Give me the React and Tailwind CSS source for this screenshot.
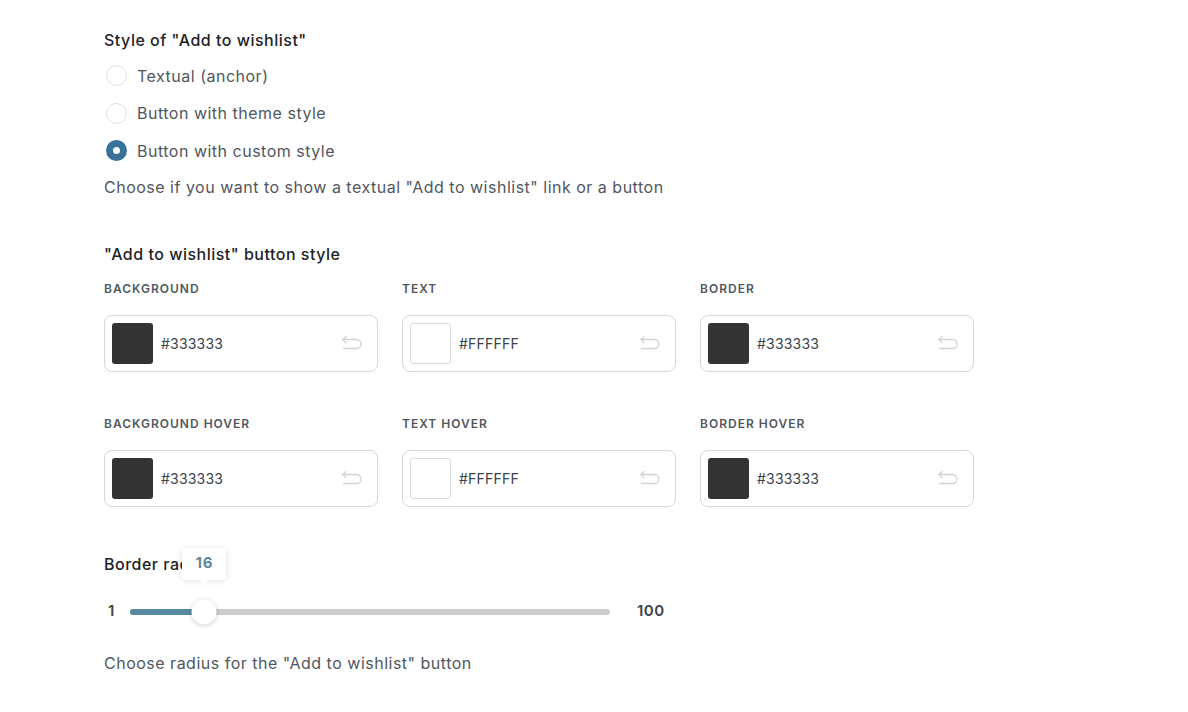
const font = { fontFamily: 'Inter, "Noto Sans", sans-serif' };

const radios = [
  { label: 'Textual (anchor)', checked: false },
  { label: 'Button with theme style', checked: false },
  { label: 'Button with custom style', checked: true },
];

const colors = [
  { label: 'Background', value: '#333333' },
  { label: 'Text', value: '#FFFFFF' },
  { label: 'Border', value: '#333333' },
  { label: 'Background hover', value: '#333333' },
  { label: 'Text hover', value: '#FFFFFF' },
  { label: 'Border hover', value: '#333333' },
];

function UndoIcon() {
  return (
    <svg width="22" height="16" viewBox="0 0 22 16" fill="none" stroke="#d2d2d2" strokeWidth="1.3" strokeLinecap="round" strokeLinejoin="round">
      <path d="M2 4.5 H15.5 a4.5 4.5 0 0 1 0 9 H2.5" />
      <path d="M5 1.5 L2 4.5 L5 7.5" />
    </svg>
  );
}

function ColorField({ label, value }) {
  const isWhite = value === '#FFFFFF';
  return (
    <div>
      <div className="text-[12px] leading-4 font-semibold uppercase tracking-[1px] text-[#50575e]">{label}</div>
      <div className="mt-[18px] h-[57px] border border-[#d6d6d6] rounded-lg flex items-center pl-[7px] pr-[14px]">
        <div
          className={`w-[41px] h-[41px] rounded-[3px] ${isWhite ? 'bg-white border border-[#dcdcdc]' : 'bg-[#333333]'}`}
        />
        <span className="ml-[8px] text-[14px] tracking-[0.2px] text-[#3c434a] flex-1">{value}</span>
        <UndoIcon />
      </div>
    </div>
  );
}

export default function App() {
  // thumb sits a touch past the linear 15/99 point in the reference
  const pct = 0.155;
  return (
    <div className="w-[1188px] h-[712px] bg-white overflow-hidden tracking-[0.5px]" style={font}>
      <div className="pl-[104px] pt-[28px] w-[974px]">
        <div className="text-[16px] leading-6 font-medium text-[#1d2327]">Style of "Add to wishlist"</div>

        <div className="mt-[5px] flex flex-col">
          {radios.map(r => (
            <div key={r.label} className="h-[37.5px] flex items-center">
              {r.checked ? (
                <div className="ml-[2px] w-[21px] h-[21px] rounded-full bg-[#36729a] flex items-center justify-center">
                  <div className="w-[7px] h-[7px] rounded-full bg-white" />
                </div>
              ) : (
                <div className="ml-[2px] w-[21px] h-[21px] rounded-full border border-[#dedede] bg-white" />
              )}
              <span className="ml-[10px] text-[16px] text-[#50575e]">{r.label}</span>
            </div>
          ))}
        </div>

        <div className="mt-[5px] text-[16px] leading-6 text-[#50575e]">
          Choose if you want to show a textual "Add to wishlist" link or a button
        </div>

        <div className="mt-[43px] text-[16px] leading-6 font-medium text-[#1d2327]">"Add to wishlist" button style</div>

        <div className="mt-[15px] grid grid-cols-3 gap-x-6 gap-y-[44px]">
          {colors.map(c => (
            <ColorField key={c.label} {...c} />
          ))}
        </div>

        <div className="mt-[45px] text-[16px] leading-6 font-medium text-[#1d2327]">Border radius</div>

        <div className="mt-[24px] h-6 flex items-center">
          <span className="w-[26px] pl-[4px] text-[15px] font-semibold text-[#3c434a]">1</span>
          <div className="relative w-[480px] h-[6px] rounded-full bg-[#cccccc]">
            <div className="absolute left-0 top-0 h-full rounded-full bg-[#5a8aa2]" style={{ width: `${pct * 100}%` }} />
            <div
              className="absolute top-1/2 w-[25px] h-[25px] -translate-x-1/2 -translate-y-1/2 rounded-full bg-white shadow-[0_1px_5px_rgba(0,0,0,0.22)]"
              style={{ left: `${pct * 100}%` }}
            />
            <div
              className="absolute bottom-[35px] -translate-x-1/2 w-[44px] h-[32px] rounded-[3px] bg-white shadow-[0_1px_6px_rgba(0,0,0,0.12)] flex items-center justify-center"
              style={{ left: `${pct * 100}%` }}
            >
              <div className="absolute -bottom-[4px] left-1/2 -translate-x-1/2 w-2 h-2 rotate-45 bg-white" />
              <span className="relative text-[15px] font-bold text-[#5a8799] tracking-[0.8px]">16</span>
            </div>
          </div>
          <span className="ml-[27px] text-[15px] font-semibold text-[#3c434a]">100</span>
        </div>

        <div className="mt-[27px] text-[16px] leading-6 text-[#50575e]">
          Choose radius for the "Add to wishlist" button
        </div>
      </div>
    </div>
  );
}
